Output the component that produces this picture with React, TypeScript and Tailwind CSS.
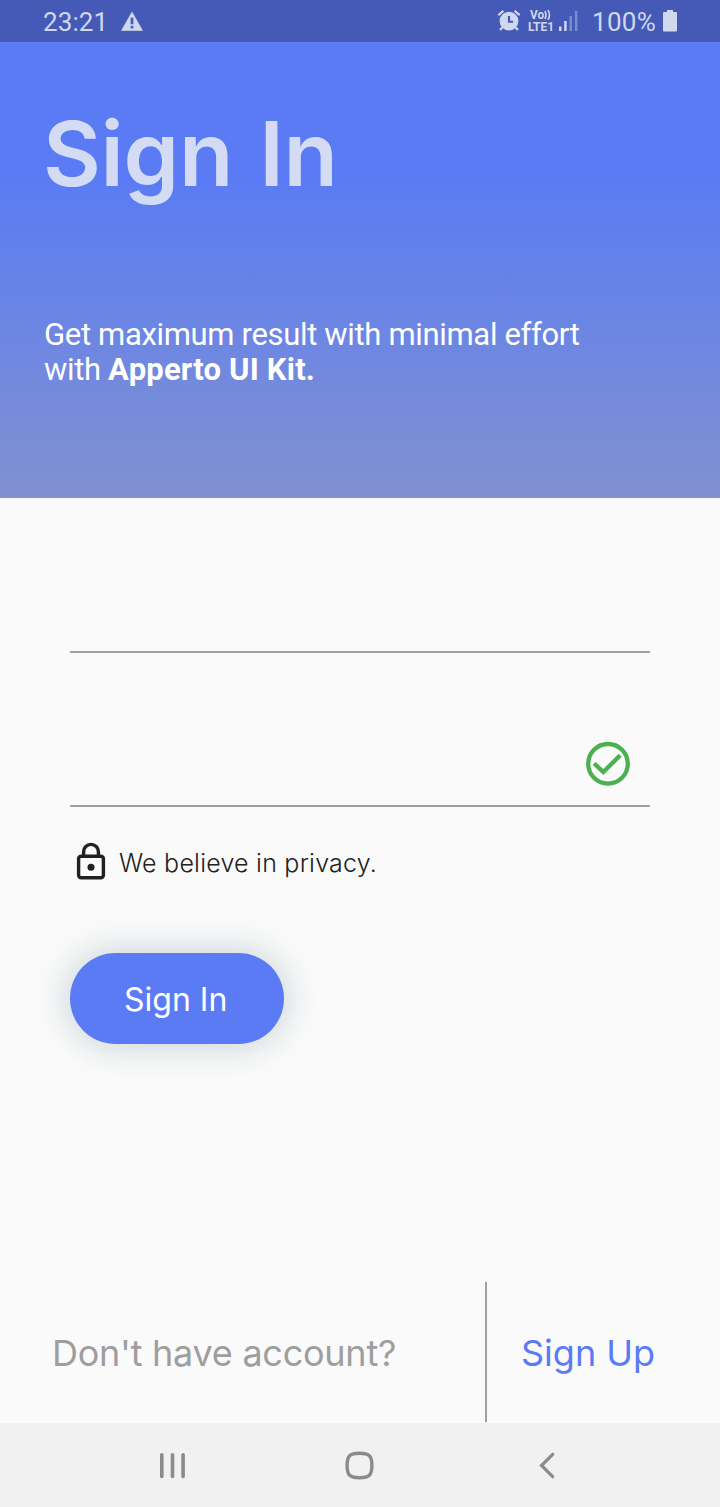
import React from "react";

function StatusBar() {
  return (
    <div className="flex h-[42px] items-center bg-[#445ab6] pl-[43px] pr-[43px] font-['Roboto',sans-serif] text-[26px] text-[#d0d7ee]">
      <span className="w-[66px] whitespace-nowrap pt-px leading-[42px] tracking-[0.1px]">23:21</span>
      <svg className="ml-[12px] h-[20px] w-[22px]" viewBox="0 0 22 20" fill="currentColor">
        <path fillRule="evenodd" d="M11 0.8 21.8 19.8H.2ZM9.5 6.5v6.800h3V6.500Zm0 8.200v2.800h3V14.700Z" stroke="currentColor" strokeWidth=".3" />
      </svg>
      <div className="ml-auto flex h-[42px] items-center">
        <svg className="h-[24px] w-[24px]" viewBox="0 0 24 24" fill="currentColor">
          <path fillRule="evenodd" d="M12 2.700a9.400 9.400 0 1 1 0 18.800 9.400 9.400 0 0 1 0-18.800ZM10.900 7v6.700h5.200v-2h-3V7Z" />
          <path d="M1.300 6.200 6.400 1.800M17.600 1.800l5.100 4.400M5.700 18.200 3 20.900M18.300 18.200l2.700 2.700" stroke="currentColor" strokeWidth="2.200" fill="none" />
        </svg>
        <svg className="ml-[7px] h-[28px] w-[27px]" viewBox="0 0 27 28" fill="currentColor">
          <text x="2" y="12" textLength="14" lengthAdjust="spacingAndGlyphs" fontFamily="Roboto, sans-serif" fontSize="12" fontWeight="700">Vo</text>
          <path d="M17 4q2 4 0 8M20 3.200q3 4.800 0 9.600" fill="none" stroke="currentColor" strokeWidth="1.600" />
          <text x="0" y="24" textLength="26" lengthAdjust="spacingAndGlyphs" fontFamily="Roboto, sans-serif" fontSize="12.500" fontWeight="700">LTE1</text>
        </svg>
        <svg className="ml-[4px] h-[20px] w-[19px]" viewBox="0 0 19 20" fill="currentColor">
          <path d="M0 15.500h2.500V20H0ZM5.200 10h2.500v10H5.200Z" />
          <path d="M10.500 5H13v15h-2.500ZM15.900 0h2.500v20h-2.500Z" opacity=".4" />
        </svg>
        <span className="ml-[14px] w-[66px] whitespace-nowrap pt-px leading-[42px] tracking-[0.3px]">100%</span>
        <svg className="ml-[5px] h-[22px] w-[14px]" viewBox="0 0 14 22" fill="currentColor">
          <path d="M4 0h6v2h3a1 1 0 0 1 1 1v17.500a1 1 0 0 1-1 1H1a1 1 0 0 1-1-1V3a1 1 0 0 1 1-1h3Z" />
        </svg>
      </div>
    </div>
  );
}

function Header() {
  return (
    <header className="h-[456px] bg-linear-to-b from-[#5a7bf4] from-30% to-[#8190cf] pl-[44px] pt-[67px] text-white">
      <h1 className="-ml-[1px] whitespace-nowrap text-[89px] font-semibold leading-[90px] tracking-[-0.3px] [word-spacing:4px] text-[#d4dcf5]">Sign In</h1>
      <p className="mt-[118px] whitespace-nowrap font-['Roboto',sans-serif] text-[31px] leading-[35px] tracking-[-0.33px]">
        <span className="block">Get maximum result with minimal effort</span>
        <span className="block">with <b className="font-bold tracking-[0.2px]">Apperto UI Kit.</b></span>
      </p>
    </header>
  );
}

function SignInForm() {
  return (
    <main className="flex h-[784px] flex-col items-start px-[70px]">
      <input aria-label="Email" className="h-[155px] w-full border-b-2 border-[#a0a0a0] bg-transparent outline-none" />
      <div className="flex h-[154px] w-full items-end justify-end border-b-2 border-[#a0a0a0] pb-[19px] pr-[19px]">
        <input aria-label="Password" type="password" className="h-[60px] flex-1 bg-transparent outline-none" />
        <svg className="h-[46px] w-[46px]" viewBox="0 0 46 46" fill="none" stroke="#4caf50">
          <circle cx="23" cy="23.800" r="19.800" strokeWidth="4.300" />
          <path d="M9.200 23.500 18.300 32.100 35.200 15.300" strokeWidth="4.300" />
        </svg>
      </div>
      <div className="mt-[33px] flex h-[40px] items-center pl-[6px]">
        <svg className="h-[40px] w-[30px]" viewBox="0 0 30 40" fill="none" stroke="#212121" strokeWidth="3.400">
          <rect x="2.600" y="16.200" width="24.800" height="21.500" rx="2.500" />
          <path d="M7.600 16.500v-4.700a7.400 7.400 0 0 1 14.800 0v4.700" />
          <circle cx="15" cy="27.200" r="3.500" fill="#212121" stroke="none" />
        </svg>
        <span className="ml-[13px] whitespace-nowrap pt-[6px] text-[25px] font-light leading-[36px] tracking-[0.23px] text-[#212121]">We believe in privacy.</span>
      </div>
      <button className="mt-[73px] flex h-[91px] w-[214px] items-center rounded-full bg-[#5a7bf4] pl-[54px] pt-[3px] text-[32px] leading-[40px] text-white shadow-[0_0_32px_5px_#cfd8dc]">
        <span className="whitespace-nowrap">Sign In</span>
      </button>
    </main>
  );
}

function AccountFooter() {
  return (
    <footer className="flex h-[141px] text-[36px] leading-[143px]">
      <div className="h-[140px] w-[487px] border-r-2 border-[#a0a0a0] pl-[52px] tracking-[-0.25px] text-[#9e9e9e]">
        <span className="whitespace-nowrap">Don't have account?</span>
      </div>
      <a className="ml-[34px] whitespace-nowrap text-[#5a7bf4]">Sign Up</a>
    </footer>
  );
}

function NavigationBar() {
  return (
    <nav className="flex h-[84px] items-center bg-[#f1f1f1] pl-[158px]">
      <svg className="h-[30px] w-[30px]" viewBox="0 0 30 30" stroke="#8b8b8b" strokeWidth="3.600" strokeLinecap="round">
        <path d="M3.800 4.700v21.800M14.500 4.700v21.800M25.100 4.700v21.800" />
      </svg>
      <svg className="ml-[156px] h-[32px] w-[32px]" viewBox="0 0 32 32" fill="none" stroke="#8b8b8b" strokeWidth="3.400">
        <path d="M15.500 4.300c-9.700 0-12.400 2.400-12.400 12.200s2.700 12.200 12.400 12.200 12.400-2.400 12.400-12.200S25.200 4.300 15.500 4.300Z" />
      </svg>
      <svg className="ml-[161px] h-[30px] w-[20px]" viewBox="0 0 20 30" fill="none" stroke="#8b8b8b" strokeWidth="3.200" strokeLinecap="round">
        <path d="M15.700 4.300 4.500 15.500 15.700 26.700" />
      </svg>
    </nav>
  );
}

export default function App() {
  return (
    <div className="flex h-[1507px] w-[720px] flex-col overflow-hidden bg-[#fafafa] font-['Inter',sans-serif]">
      <StatusBar />
      <Header />
      <SignInForm />
      <AccountFooter />
      <NavigationBar />
    </div>
  );
}
